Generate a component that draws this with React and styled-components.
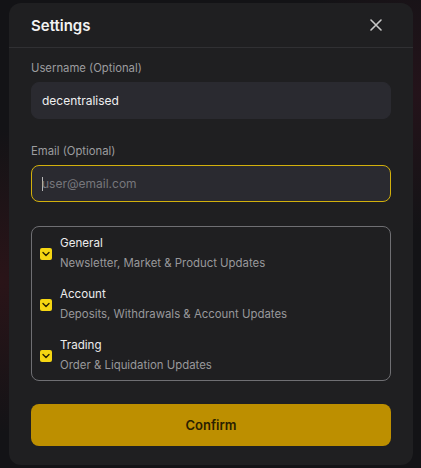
import * as React from 'react'
import styled, { createGlobalStyle } from 'styled-components'

const GlobalStyle = createGlobalStyle`
	html, body {
		margin: 0;
		padding: 0;
		background: #131316;
		font-family: Inter, "Noto Sans", sans-serif;
		-webkit-font-smoothing: antialiased;
	}
	* { box-sizing: border-box; }
`

const Page = styled.div`
	width: 421px;
	height: 468px;
	padding: 3px 8px 0 9px;
	overflow: hidden;
	background: radial-gradient(circle at 0% 60%, #2a1418 0%, transparent 30%),
		radial-gradient(circle at 100% 20%, #24131a 0%, transparent 25%), #131316;
`

const Modal = styled.div`
	width: 404px;
	height: 462px;
	background: #1f1f21;
	border-radius: 12px;
	display: flex;
	flex-direction: column;
`

const Header = styled.div`
	height: 47px;
	padding: 0 22px;
	display: flex;
	align-items: center;
	justify-content: space-between;
	border-bottom: 1px solid #303033;
`

const Title = styled.h2`
	margin: 0;
	font-size: 15px;
	font-weight: 600;
	color: #f2f2f2;
`

const CloseButton = styled.button`
	width: 20px;
	height: 20px;
	padding: 0;
	margin-right: 5px;
	border: none;
	background: none;
	display: flex;
	align-items: center;
	justify-content: center;
	color: #c8c8c8;
`

const Body = styled.div`
	padding: 12px 22px 19px;
	display: flex;
	flex-direction: column;
`

const Field = styled.div`
	display: flex;
	flex-direction: column;
	gap: 6px;
	margin-bottom: 24px;
`

const Label = styled.label`
	font-size: 11.3px;
	line-height: 16px;
	color: #9c9c9f;
`

const Input = styled.div`
	height: 37px;
	border-radius: 8px;
	background: #2a2a30;
	border: 1px solid ${({ focused }) => (focused ? '#d2b00c' : '#2a2a30')};
	padding: 0 10px;
	display: flex;
	align-items: center;
	font-size: 12px;
	color: ${({ placeholder }) => (placeholder ? '#77777c' : '#f0f0f0')};
`

const Caret = styled.span`
	display: inline-block;
	width: 1px;
	height: 14px;
	background: #b8b8b8;
	margin-right: -1px;
`

const Group = styled.div`
	border: 1px solid #6f6f73;
	border-radius: 8px;
	padding: 0 8px;
	margin-bottom: 23px;
`

const Option = styled.div`
	height: 51px;
	display: flex;
	align-items: center;
	gap: 8px;
	padding-top: 1px;
`

const Box = styled.span`
	width: 12px;
	height: 12px;
	border-radius: 2px;
	background: #f5d612;
	display: flex;
	align-items: center;
	justify-content: center;
	flex-shrink: 0;
	margin-top: 2px;
`

const OptionText = styled.div`
	display: flex;
	flex-direction: column;
	gap: 4px;
`

const OptionTitle = styled.span`
	font-size: 11.6px;
	line-height: 16px;
	color: #ececec;
`

const OptionInfo = styled.span`
	font-size: 11.4px;
	line-height: 16px;
	color: #98989b;
`

const Confirm = styled.button`
	height: 42px;
	border: none;
	border-radius: 8px;
	background: #bd8f00;
	color: #2a2000;
	font-family: inherit;
	font-size: 13px;
	font-weight: 600;
`

const options = [
	{ key: 'general', title: 'General', info: 'Newsletter, Market & Product Updates' },
	{ key: 'account', title: 'Account', info: 'Deposits, Withdrawals & Account Updates' },
	{ key: 'trading', title: 'Trading', info: 'Order & Liquidation Updates' },
]

const Check = () => (
	<svg width="8" height="6" viewBox="0 0 8 6" fill="none">
		<path d="M1 1.5L4 4.5L7 1.5" stroke="#2a2200" strokeWidth="1.4" strokeLinecap="round" strokeLinejoin="round" />
	</svg>
)

const App = () => (
	<Page>
		<GlobalStyle />
		<Modal>
			<Header>
				<Title>Settings</Title>
				<CloseButton>
					<svg width="12" height="12" viewBox="0 0 12 12" fill="none">
						<path d="M1 1L11 11M11 1L1 11" stroke="currentColor" strokeWidth="1.6" strokeLinecap="round" />
					</svg>
				</CloseButton>
			</Header>
			<Body>
				<Field>
					<Label>Username (Optional)</Label>
					<Input>decentralised</Input>
				</Field>
				<Field>
					<Label>Email (Optional)</Label>
					<Input focused placeholder>
						<Caret />
						user@email.com
					</Input>
				</Field>
				<Group>
					{options.map(({ key, title, info }) => (
						<Option key={key}>
							<Box>
								<Check />
							</Box>
							<OptionText>
								<OptionTitle>{title}</OptionTitle>
								<OptionInfo>{info}</OptionInfo>
							</OptionText>
						</Option>
					))}
				</Group>
				<Confirm>Confirm</Confirm>
			</Body>
		</Modal>
	</Page>
)

export default App
